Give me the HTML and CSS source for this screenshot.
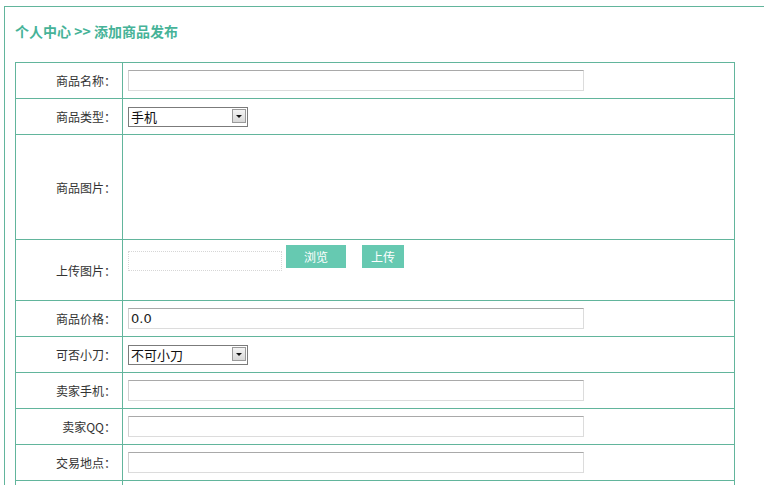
FILE: index.html
```html
<!DOCTYPE html>
<html lang="zh-CN">
<head>
<meta charset="utf-8">
<title>添加商品发布</title>
<link rel="stylesheet" href="styles.css">
</head>
<body>
<div class="panel">
  <h2 class="title">个人中心 &gt;&gt; 添加商品发布</h2>
  <form class="form">
    <div class="row">
      <label class="label">商品名称：</label>
      <div class="field"><input class="text" type="text"></div>
    </div>
    <div class="row">
      <label class="label">商品类型：</label>
      <div class="field">
        <span class="select-wrap"><select class="select"><option>手机</option></select></span>
      </div>
    </div>
    <div class="row row-pic">
      <label class="label">商品图片：</label>
      <div class="field"></div>
    </div>
    <div class="row row-upload">
      <label class="label">上传图片：</label>
      <div class="field field-upload">
        <input class="file-path" type="text" readonly>
        <button type="button" class="btn btn-browse">浏览</button>
        <button type="button" class="btn btn-upload">上传</button>
      </div>
    </div>
    <div class="row">
      <label class="label">商品价格：</label>
      <div class="field"><input class="text" type="text" value="0.0"></div>
    </div>
    <div class="row">
      <label class="label">可否小刀：</label>
      <div class="field">
        <span class="select-wrap"><select class="select"><option>不可小刀</option></select></span>
      </div>
    </div>
    <div class="row">
      <label class="label">卖家手机：</label>
      <div class="field"><input class="text" type="text"></div>
    </div>
    <div class="row">
      <label class="label">卖家QQ：</label>
      <div class="field"><input class="text" type="text"></div>
    </div>
    <div class="row">
      <label class="label">交易地点：</label>
      <div class="field"><input class="text" type="text"></div>
    </div>
    <div class="row row-desc">
      <div class="label"></div>
      <div class="field"></div>
    </div>
  </form>
</div>
</body>
</html>
```

FILE: styles.css
```css
html, body {
  margin: 0;
  padding: 0;
  background: #ffffff;
  overflow: hidden;
}

body {
  font-family: "Noto Sans CJK SC", "Liberation Sans", sans-serif;
  font-size: 12px;
  color: #333333;
}

.panel {
  margin: 6px 0 0 4px;
  border-top: 1px solid #62b59c;
  border-left: 1px solid #62b59c;
  padding: 14px 0 0 10px;
  height: 600px;
}

.title {
  margin: 0 0 21px 0;
  height: 20px;
  line-height: 20px;
  font-size: 14px;
  font-weight: bold;
  color: #46b398;
}

.form {
  width: 720px;
  border-top: 1px solid #62b59c;
  margin: 0;
}

.row {
  display: flex;
  box-sizing: border-box;
  width: 720px;
  height: 36px;
  border-left: 1px solid #62b59c;
  border-right: 1px solid #62b59c;
  border-bottom: 1px solid #62b59c;
}

.row-pic { height: 105px; }
.row-upload { height: 61px; }
.row-desc { height: 120px; }

.label {
  box-sizing: border-box;
  width: 107px;
  flex: none;
  border-right: 1px solid #62b59c;
  display: flex;
  align-items: center;
  justify-content: flex-end;
  padding-right: 6px;
  color: #333333;
  font-size: 12px;
}

.field {
  flex: 1;
  display: flex;
  align-items: center;
  padding-left: 5px;
}

.text {
  box-sizing: border-box;
  width: 456px;
  height: 21px;
  margin: 0;
  padding: 0 2px;
  border: 1px solid #dcdcdc;
  border-top-color: #a9a9a9;
  border-left-color: #d0d0d0;
  font-family: "DejaVu Sans", "Liberation Sans", sans-serif;
  font-size: 13px;
  color: #222222;
  outline: none;
}

.select-wrap {
  position: relative;
  display: inline-block;
  width: 120px;
  height: 20px;
  margin-top: 1px;
}

.select {
  box-sizing: border-box;
  width: 120px;
  height: 20px;
  margin: 0;
  padding: 0 0 0 2px;
  border: 1px solid #7b7b7b;
  border-radius: 0;
  background: #ffffff;
  -webkit-appearance: none;
  appearance: none;
  font-family: "Noto Sans CJK SC", sans-serif;
  font-size: 13px;
  line-height: 18px;
  color: #111111;
}

.select-wrap::after {
  content: "";
  position: absolute;
  right: 2px;
  top: 2px;
  width: 14px;
  height: 14px;
  box-sizing: border-box;
  border: 1px solid #9a9a9a;
  background: linear-gradient(#f4f4f4, #d8d8d8);
  pointer-events: none;
}

.select-wrap::before {
  content: "";
  position: absolute;
  right: 6px;
  top: 8px;
  width: 0;
  height: 0;
  border-left: 3px solid transparent;
  border-right: 3px solid transparent;
  border-top: 3px solid #111111;
  z-index: 1;
  pointer-events: none;
}

.field-upload {
  align-items: flex-start;
  padding-top: 5px;
  box-sizing: border-box;
}

.file-path {
  box-sizing: border-box;
  width: 154px;
  height: 20px;
  margin: 6px 4px 0 0;
  padding: 0;
  border: 1px dotted #d6d6d6;
  background: #ffffff;
  outline: none;
}

.btn {
  height: 23px;
  margin: 0;
  padding: 0;
  border: none;
  background: #66c9b1;
  color: #ffffff;
  font-family: "Noto Sans CJK SC", sans-serif;
  font-size: 12px;
  line-height: 23px;
}

.btn-browse {
  width: 60px;
  margin-right: 16px;
}

.btn-upload {
  width: 42px;
}
```
